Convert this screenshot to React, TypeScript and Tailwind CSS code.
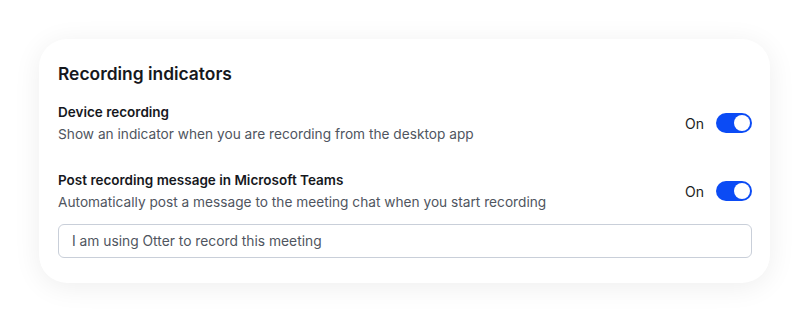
const Toggle = ({ on }: { on: boolean }) => (
  <div className="flex items-center gap-3">
    <span className="text-[14px] text-[#1b1d22]">On</span>
    <div
      className={`flex h-[20px] w-[36px] items-center rounded-full px-[2px] ${
        on ? "justify-end bg-[#0b4bf5]" : "justify-start bg-gray-300"
      }`}
    >
      <div className="size-[16px] rounded-full bg-white" />
    </div>
  </div>
)

const SettingRow = ({ title, desc }: { title: string; desc: string }) => (
  <div className="flex items-center justify-between">
    <div>
      <div className="text-[13.5px] leading-[20px] font-semibold text-[#16181d]">{title}</div>
      <div className="mt-[2px] text-[13.7px] leading-[20px] text-[#4f5560]">{desc}</div>
    </div>
    <Toggle on />
  </div>
)

const App = () => {
  return (
    <div
      className="h-[322px] w-[809px] bg-white pt-[39px] pl-[39px]"
      style={{ fontFamily: "Inter, 'Open Sans', sans-serif" }}
    >
      <div className="w-[731px] rounded-[28px] bg-white pt-[24px] pb-[25px] pl-[19px] pr-[18px] shadow-[0_4px_28px_rgba(0,0,0,0.07)]">
        <h2 className="text-[17.4px] leading-[22px] font-semibold text-[#16181d]">Recording indicators</h2>
        <div className="mt-[17px]">
          <SettingRow
            title="Device recording"
            desc="Show an indicator when you are recording from the desktop app"
          />
        </div>
        <div className="mt-[26px]">
          <SettingRow
            title="Post recording message in Microsoft Teams"
            desc="Automatically post a message to the meeting chat when you start recording"
          />
        </div>
        <input
          readOnly
          value="I am using Otter to record this meeting"
          className="mt-[12px] h-[34px] w-full rounded-[6px] border border-[#c9cfd9] px-[13px] text-[13.8px] text-[#4f5560] outline-none"
        />
      </div>
    </div>
  )
}

export default App
